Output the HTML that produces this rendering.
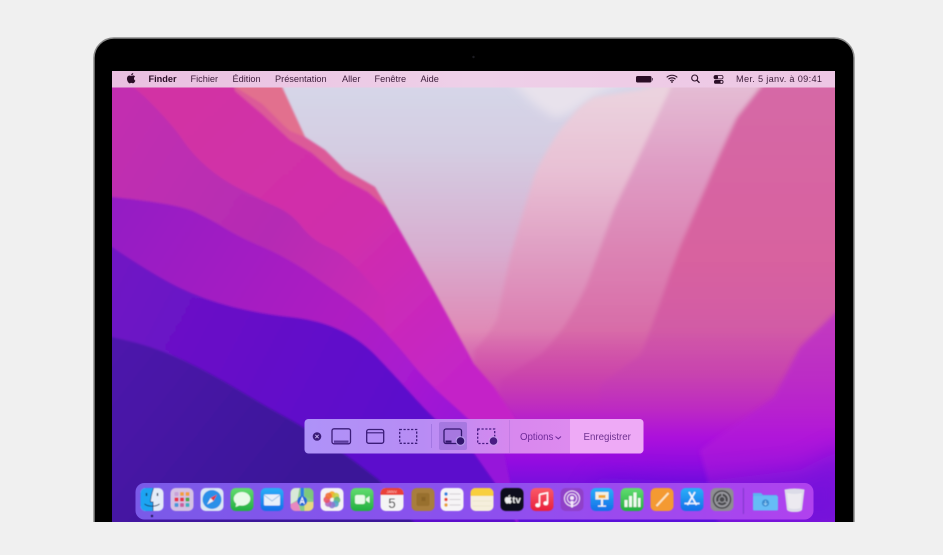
<!DOCTYPE html>
<html>
<head>
<meta charset="utf-8">
<title>macOS</title>
<style>
html,body{margin:0;padding:0;background:#f0f0f0;width:943px;height:555px;overflow:hidden}
svg{display:block}
text{font-family:"Liberation Sans",sans-serif}
</style>
</head>
<body>
<svg width="943" height="555" viewBox="0 0 943 555" xmlns="http://www.w3.org/2000/svg">
<defs>
<clipPath id="scr"><rect x="112" y="71" width="723" height="451"/></clipPath>
<filter id="b1" x="-5%" y="-5%" width="110%" height="110%"><feGaussianBlur stdDeviation="1"/></filter>
<filter id="b2" x="-5%" y="-5%" width="110%" height="110%"><feGaussianBlur stdDeviation="2"/></filter>
<filter id="b3" x="-10%" y="-10%" width="120%" height="120%"><feGaussianBlur stdDeviation="5"/></filter>
<filter id="b4" x="-20%" y="-20%" width="140%" height="140%"><feGaussianBlur stdDeviation="12"/></filter>
<filter id="s" x="-5%" y="-5%" width="110%" height="110%"><feGaussianBlur stdDeviation="0.35"/></filter>
<filter id="d" x="-5%" y="-5%" width="110%" height="110%"><feGaussianBlur stdDeviation="0.5"/></filter>
<linearGradient id="sky" gradientUnits="userSpaceOnUse" x1="0" y1="87" x2="0" y2="400"><stop offset="0" stop-color="#d6d6e8"/><stop offset=".2" stop-color="#d4cde2"/><stop offset=".52" stop-color="#d8aed0"/><stop offset=".78" stop-color="#e08ab6"/><stop offset="1" stop-color="#e07aac"/></linearGradient>
<linearGradient id="la" gradientUnits="userSpaceOnUse" x1="0" y1="95" x2="0" y2="400"><stop offset="0" stop-color="#ebd2de"/><stop offset=".25" stop-color="#e8c0d4"/><stop offset=".5" stop-color="#e0a0c4"/><stop offset=".78" stop-color="#dc7cb0"/><stop offset="1" stop-color="#e060a0"/></linearGradient>
<linearGradient id="lb" gradientUnits="userSpaceOnUse" x1="0" y1="87" x2="0" y2="400"><stop offset="0" stop-color="#e4bcd4"/><stop offset=".26" stop-color="#df9cc4"/><stop offset=".52" stop-color="#dc84b4"/><stop offset=".78" stop-color="#d86ca8"/><stop offset="1" stop-color="#d6509e"/></linearGradient>
<linearGradient id="lc" gradientUnits="userSpaceOnUse" x1="0" y1="87" x2="0" y2="400"><stop offset="0" stop-color="#d668a6"/><stop offset=".55" stop-color="#d8629f"/><stop offset=".85" stop-color="#d058a8"/><stop offset="1" stop-color="#c84cb0"/></linearGradient>
<linearGradient id="bot" gradientUnits="userSpaceOnUse" x1="0" y1="330" x2="0" y2="522"><stop offset="0" stop-color="#c83cb0" stop-opacity="0"/><stop offset=".22" stop-color="#c63cb0" stop-opacity=".65"/><stop offset=".42" stop-color="#bc28c4"/><stop offset=".56" stop-color="#ac10dc"/><stop offset=".7" stop-color="#900ce0"/><stop offset=".84" stop-color="#7010dc"/><stop offset="1" stop-color="#5a10d8"/></linearGradient>
<linearGradient id="m1" gradientUnits="userSpaceOnUse" x1="200" y1="87" x2="470" y2="370"><stop offset="0" stop-color="#d232a4"/><stop offset=".55" stop-color="#d02eac"/><stop offset="1" stop-color="#c424c8"/></linearGradient>
<linearGradient id="m2" gradientUnits="userSpaceOnUse" x1="112" y1="120" x2="390" y2="290"><stop offset="0" stop-color="#c22fb0"/><stop offset=".6" stop-color="#b52cb4"/><stop offset="1" stop-color="#ca2cb6"/></linearGradient>
<linearGradient id="m3" gradientUnits="userSpaceOnUse" x1="112" y1="200" x2="470" y2="430"><stop offset="0" stop-color="#941ac4"/><stop offset=".6" stop-color="#ae1ec2"/><stop offset=".8" stop-color="#a81ad0"/><stop offset="1" stop-color="#9612da"/></linearGradient>
<linearGradient id="m4" gradientUnits="userSpaceOnUse" x1="112" y1="250" x2="400" y2="400"><stop offset="0" stop-color="#7014c4"/><stop offset="1" stop-color="#5c0ccc"/></linearGradient>
<linearGradient id="m5" gradientUnits="userSpaceOnUse" x1="112" y1="340" x2="300" y2="490"><stop offset="0" stop-color="#4e12ac"/><stop offset="1" stop-color="#3a1298"/></linearGradient>
<linearGradient id="menu" x1="0" y1="0" x2="1" y2="0"><stop offset="0" stop-color="#e9bfe0"/><stop offset=".5" stop-color="#eed0e8"/><stop offset="1" stop-color="#edc6e4"/></linearGradient>
<linearGradient id="dock" x1="0" y1="0" x2="1" y2="0"><stop offset="0" stop-color="#7a5ae8"/><stop offset=".5" stop-color="#8c50ee"/><stop offset="1" stop-color="#b042ee"/></linearGradient>
<linearGradient id="tb" x1="0" y1="0" x2="1" y2="0"><stop offset="0" stop-color="#ae92f8"/><stop offset=".35" stop-color="#b88cf4"/><stop offset=".62" stop-color="#d888ee"/><stop offset="1" stop-color="#e48cf0"/></linearGradient>
<linearGradient id="gG" x1="0" y1="0" x2="0" y2="1"><stop offset="0" stop-color="#62dc70"/><stop offset="1" stop-color="#22b040"/></linearGradient>
<linearGradient id="gB" x1="0" y1="0" x2="0" y2="1"><stop offset="0" stop-color="#2ab0f8"/><stop offset="1" stop-color="#1470e8"/></linearGradient>
<linearGradient id="gR" x1="0" y1="0" x2="0" y2="1"><stop offset="0" stop-color="#fa5a68"/><stop offset="1" stop-color="#e8203c"/></linearGradient>
<path id="apl" d="M12.152 6.896c-.948 0-2.415-1.078-3.96-1.04-2.04.027-3.91 1.183-4.961 3.014-2.117 3.675-.546 9.103 1.519 12.09 1.013 1.454 2.208 3.09 3.792 3.039 1.52-.065 2.09-.987 3.935-.987 1.831 0 2.35.987 3.96.948 1.637-.026 2.676-1.48 3.676-2.948 1.156-1.688 1.636-3.325 1.662-3.415-.039-.013-3.182-1.221-3.22-4.857-.026-3.04 2.48-4.494 2.597-4.559-1.429-2.09-3.623-2.324-4.39-2.376-2-.156-3.675 1.09-4.61 1.09zM15.53 3.83c.843-1.012 1.4-2.427 1.245-3.83-1.207.052-2.662.805-3.532 1.818-.78.896-1.454 2.338-1.273 3.714 1.338.104 2.715-.688 3.559-1.701"/>
</defs>

<rect width="943" height="555" fill="#f0f0f0"/>
<path d="M94 522V58a20 20 0 0 1 20-20H834a20 20 0 0 1 20 20V522Z" fill="#000"/>
<path d="M94 522V58a20 20 0 0 1 20-20H834a20 20 0 0 1 20 20V522" fill="none" stroke="#8a8a8a" stroke-width="1.500"/>
<circle cx="473.500" cy="57" r="1.200" fill="#1c1c22"/>

<g clip-path="url(#scr)">
 <rect x="105" y="65" width="740" height="465" fill="#4c10c0"/>
 <g filter="url(#b1)">
  <rect x="270" y="80" width="420" height="330" fill="url(#sky)"/>
 </g>
 <path d="M505 75L535 105L555 118L572 112L600 92L640 75Z" fill="#e8e2ec" filter="url(#b3)"/>
 <g filter="url(#b2)">
  <path d="M676 80L640 90L594 97Q580 105 571 117Q559 130 551 144Q541 160 534 177Q522 215 511 254Q503 290 497 320Q487 338 474 350V530H850V80Z" fill="url(#la)"/>
  <path d="M674 80L654 124Q642 150 631 174Q622 192 614 210Q600 248 587 284Q576 308 565 325Q553 342 541 354L500 380V530H850V80Z" fill="url(#lb)"/>
  <path d="M766 80L737 117Q721 150 707 184Q694 214 681 244Q670 272 661 300Q651 328 641 354L600 385V530H850V80Z" fill="url(#lc)"/>
 </g>
 <rect x="440" y="320" width="410" height="210" fill="url(#bot)"/>
 <path d="M850 300L835 313L800 347L774 397L735 425L700 450L720 530H850Z" fill="#b41cd8" opacity=".55" filter="url(#b2)"/>
 <path d="M850 445L800 470L700 482L600 478L570 530H850Z" fill="#5a10dc" opacity=".5" filter="url(#b4)"/>

 <g filter="url(#b1)">
  <path d="M100 80H279L282 87L305 137L325 150L345 170L375 187L402 234L432 287L474 364L494 387L514 417L520 432L500 450L400 530H100Z" fill="url(#m1)"/>
  <path d="M232 80L235 87L262 104L282 124L305 137L325 150L345 170L375 187L388 209L368 192L340 177L312 153L290 140L262 114L235 91Z" fill="#dc5a98"/>
  <path d="M235 80H279L282 87L305 137L290 131L282 124L262 104L235 87Z" fill="#e2708e"/>
  <path d="M100 80H125L145 97Q172 124 182 139Q192 154 207 167Q222 180 242 190Q262 200 277 207Q292 214 302 227Q312 240 328 247Q345 254 365 277L385 300L385 340L100 300Z" fill="url(#m2)"/>
  <path d="M100 197L112 197Q179 204 195 212Q212 220 228 230Q245 240 265 248Q285 257 305 270Q325 284 348 300Q372 317 385 332Q399 347 415 367Q432 387 453 405L474 424L504 452L520 530H100Z" fill="url(#m3)"/>
  <path d="M100 240L112 247Q152 274 178 287Q205 300 233 307Q262 314 290 317Q319 320 340 330Q362 340 380 360Q399 380 415 398Q432 417 453 435L474 453L500 490L520 530H100Z" fill="url(#m4)"/>
  <path d="M100 334L112 337L137 343Q162 350 187 362Q212 374 237 389Q262 404 280 414Q299 424 322 439Q345 454 362 467L379 480L420 530H100Z" fill="url(#m5)"/>
 </g>

 <rect x="112" y="71" width="723" height="16.500" fill="url(#menu)"/>
</g>

<g filter="url(#s)">
 <use href="#apl" transform="translate(126,73) scale(.43)" fill="#2c1028"/>
 <g font-size="9.200" fill="#3d1d3a">
  <text x="148.500" y="82" font-weight="700" fill="#2c1028">Finder</text>
  <text x="190.500" y="82">Fichier</text>
  <text x="232.500" y="82">Édition</text>
  <text x="275" y="82">Présentation</text>
  <text x="342" y="82">Aller</text>
  <text x="374.500" y="82">Fenêtre</text>
  <text x="420.500" y="82">Aide</text>
  <text x="736" y="82" textLength="86" lengthAdjust="spacing">Mer. 5 janv. à 09:41</text>
 </g>
 <rect x="636" y="76" width="15.500" height="6.500" rx="1.600" fill="#2a1026"/>
 <rect x="652" y="78" width="1" height="2.500" fill="#6a4a66"/>
 <g fill="none" stroke="#2a1026" stroke-width="1.100">
  <path d="M666.700 77.400a7.600 7.600 0 0 1 10.600 0"/>
  <path d="M668.500 79.200a5 5 0 0 1 7 0"/>
  <path d="M670.200 80.900a2.600 2.600 0 0 1 3.600 0"/>
 </g>
 <circle cx="672" cy="82" r=".9" fill="#2a1026"/>
 <circle cx="694.700" cy="78" r="3" fill="none" stroke="#2a1026" stroke-width="1.100"/>
 <path d="M697 80.300L699.500 82.800" stroke="#2a1026" stroke-width="1.300"/>
 <rect x="714" y="75.500" width="9" height="3.400" rx="1.500" fill="none" stroke="#2a1026" stroke-width=".8"/>
 <rect x="714" y="75.300" width="4" height="3.800" rx="1.500" fill="#2a1026"/>
 <rect x="714" y="80" width="9.500" height="3.800" rx="1.700" fill="#2a1026"/>
 <circle cx="721.500" cy="81.900" r="1.100" fill="#e9c4e2"/>
</g>

<g>
 <rect x="304.500" y="419" width="339" height="34.500" rx="4" fill="url(#tb)"/>
 <path d="M570 419H639.500a4 4 0 0 1 4 4V449.500a4 4 0 0 1-4 4H570Z" fill="#eeaaf6"/>
 <rect x="439" y="422" width="28" height="28" rx="2" fill="#9a70d8" opacity=".7"/>
 <rect x="431" y="424" width=".8" height="24" fill="#8a60d0" opacity=".6"/>
 <rect x="509" y="420" width=".8" height="33" fill="#b070d8" opacity=".6"/>
 <g filter="url(#s)">
  <circle cx="317" cy="436.500" r="4.300" fill="#3a1a78"/>
  <path d="M315.300 434.800L318.700 438.200M318.700 434.800L315.300 438.200" stroke="#c8b4f0" stroke-width=".9"/>
  <rect x="332" y="428.800" width="18.500" height="15" rx="2" fill="none" stroke="#3a1a78" stroke-width="1.300"/>
  <rect x="334" y="440.500" width="14.500" height="2.300" fill="#5a3a9c"/>
  <rect x="366.700" y="429.500" width="17" height="13.800" rx="2" fill="none" stroke="#3a1a78" stroke-width="1.300"/>
  <path d="M367 432.800H383.500" stroke="#3a1a78" stroke-width="1.200"/>
  <rect x="399.700" y="429.500" width="17" height="13.800" fill="none" stroke="#3a1a78" stroke-width="1.300" stroke-dasharray="2.200 1.600"/>
  <rect x="444" y="429" width="17.500" height="14.500" rx="2" fill="none" stroke="#33146c" stroke-width="1.300"/>
  <rect x="445.500" y="440.500" width="6" height="2.200" fill="#33146c"/>
  <circle cx="460.500" cy="441" r="4.900" fill="#b49ae8"/>
  <circle cx="460.500" cy="441" r="3.800" fill="#33146c"/>
  <rect x="477.700" y="429" width="17" height="14.500" fill="none" stroke="#4a1a84" stroke-width="1.300" stroke-dasharray="2.200 1.600"/>
  <circle cx="493.500" cy="441" r="4.900" fill="#c89cec"/>
  <circle cx="493.500" cy="441" r="3.800" fill="#4a1a84"/>
  <text x="520" y="440" font-size="9.700" fill="#6e2a98">Options</text>
  <path d="M555.500 436.500L558.300 438.800L561 436.500" fill="none" stroke="#6e2a98" stroke-width="1"/>
  <text x="583.500" y="440" font-size="9.700" fill="#6e3090">Enregistrer</text>
 </g>
</g>

<rect x="135.500" y="483" width="678" height="36.500" rx="9" fill="url(#dock)"/>
<g filter="url(#d)">
<circle cx="152" cy="516" r="1.100" fill="#120a40"/>
<rect x="743" y="488" width=".8" height="26" fill="#6a30b8" opacity=".8"/>

<g transform="translate(140.500,488)">
 <rect width="23" height="23" rx="5" fill="#e4ecf8"/>
 <path d="M5 0H13C11 6 10 11 10 14H12.500V23H5A5 5 0 0 1 0 18V5A5 5 0 0 1 5 0Z" fill="#1ea4f2"/>
 <path d="M13 0C11 6 10 11 10 14H12.500V23" fill="none" stroke="#0e3a70" stroke-width=".8"/>
 <path d="M6 5V8M17 5V8" stroke="#0e2a50" stroke-width="1.300"/>
 <path d="M4 16C8 19 15 19 19 16" fill="none" stroke="#0e2a50" stroke-width=".8"/>
</g>
<g transform="translate(170.500,488)">
 <rect width="23" height="23" rx="5" fill="#d6c2e4"/>
 <rect x="4" y="4" width="4" height="4" rx="1" fill="#c8a0d8"/><rect x="9.500" y="4" width="4" height="4" rx="1" fill="#f0a040"/><rect x="15" y="4" width="4" height="4" rx="1" fill="#f0a040"/>
 <rect x="4" y="9.500" width="4" height="4" rx="1" fill="#e83048"/><rect x="9.500" y="9.500" width="4" height="4" rx="1" fill="#e83048"/><rect x="15" y="9.500" width="4" height="4" rx="1" fill="#50a848"/>
 <rect x="4" y="15" width="4" height="4" rx="1" fill="#4898d8"/><rect x="9.500" y="15" width="4" height="4" rx="1" fill="#c860a0"/><rect x="15" y="15" width="4" height="4" rx="1" fill="#40b0c0"/>
</g>
<g transform="translate(200.500,488)">
 <rect width="23" height="23" rx="5" fill="#dce8f4"/>
 <circle cx="11.500" cy="11.500" r="9.500" fill="#2c90e8"/>
 <path d="M16.500 6.500L10 10L13 13Z" fill="#e83838"/>
 <path d="M6.500 16.500L10 10L13 13Z" fill="#f2f2f2"/>
</g>
<g transform="translate(230.500,488)">
 <rect width="23" height="23" rx="5" fill="url(#gG)"/>
 <ellipse cx="11.500" cy="10.800" rx="8.300" ry="6.800" fill="#e8fae8"/>
 <path d="M6 15L5 19L10 17Z" fill="#e8fae8"/>
</g>
<g transform="translate(260.500,488)">
 <rect width="23" height="23" rx="5" fill="url(#gB)"/>
 <rect x="3.500" y="6.500" width="16" height="11" rx="1" fill="#e8f0fa"/>
 <path d="M3.500 7L11.500 13L19.500 7" fill="none" stroke="#9cc0e4" stroke-width=".9"/>
</g>
<g transform="translate(290.500,488)">
 <rect width="23" height="23" rx="5" fill="#88cc88"/>
 <path d="M0 5A5 5 0 0 1 5 0H9L7 12L0 16Z" fill="#d8e8d8"/>
 <path d="M15 0H18A5 5 0 0 1 23 5V12L14 8Z" fill="#7cc87c"/>
 <path d="M0 16L7 13L10 23H5A5 5 0 0 1 0 18Z" fill="#e888c0"/>
 <path d="M14 14L23 14V18A5 5 0 0 1 18 23H14Z" fill="#e8d880"/>
 <path d="M10 0H13.500V9H10Z" fill="#2a80e0"/>
 <circle cx="11.700" cy="13" r="5" fill="#2468d8"/>
 <path d="M9.500 16L11.700 9.800L13.900 16M10.300 14H13.100" fill="none" stroke="#fff" stroke-width=".9"/>
</g>
<g transform="translate(320.500,488)">
 <rect width="23" height="23" rx="5" fill="#f4f2f4"/>
 <circle cx="11.500" cy="6.500" r="3.400" fill="#f5b030"/>
 <circle cx="15.500" cy="8" r="3.400" fill="#c8d040" opacity=".9"/>
 <circle cx="16.500" cy="12" r="3.400" fill="#60b870" opacity=".9"/>
 <circle cx="15" cy="15.800" r="3.400" fill="#50a8c8" opacity=".9"/>
 <circle cx="11.500" cy="17" r="3.400" fill="#8878d0" opacity=".9"/>
 <circle cx="7.800" cy="15.500" r="3.400" fill="#b068c0" opacity=".9"/>
 <circle cx="6.300" cy="11.700" r="3.400" fill="#e85068" opacity=".9"/>
 <circle cx="8" cy="8" r="3.400" fill="#f07038" opacity=".9"/>
</g>
<g transform="translate(350.500,488)">
 <rect width="23" height="23" rx="5" fill="url(#gG)"/>
 <rect x="4.500" y="7" width="10" height="9" rx="2" fill="#e8fae8"/>
 <path d="M15.500 10.500L19 8V15L15.500 12.500Z" fill="#e8fae8"/>
</g>
<g transform="translate(380.500,488)">
 <rect width="23" height="23" rx="5" fill="#f4f4f4"/>
 <path d="M5 0H18A5 5 0 0 1 23 5V7H0V5A5 5 0 0 1 5 0Z" fill="#ea4038"/>
 <text x="11.500" y="5.200" font-size="4" fill="#fbd0c8" text-anchor="middle">JANV.</text>
 <text x="11.500" y="20" font-size="13.500" fill="#3a3a3a" text-anchor="middle">5</text>
</g>
<g transform="translate(411.500,488)">
 <rect width="23" height="23" rx="5" fill="#a87e3c"/>
 <rect x="5" y="5" width="13" height="13" rx="2" fill="#98702e"/>
 <rect x="10" y="9" width="4" height="4" fill="#8a6428"/>
</g>
<g transform="translate(440.500,488)">
 <rect width="23" height="23" rx="5" fill="#f6f4f6"/>
 <circle cx="5.500" cy="6" r="1.700" fill="#2a80e0"/><circle cx="5.500" cy="11.500" r="1.700" fill="#e84030"/><circle cx="5.500" cy="17" r="1.700" fill="#e8a030"/>
 <path d="M9 6H20M9 11.500H20M9 17H20" stroke="#c8c4c8" stroke-width=".8"/>
</g>
<g transform="translate(470.500,488)">
 <rect width="23" height="23" rx="5" fill="#f5efdc"/>
 <path d="M5 0H18A5 5 0 0 1 23 5V8H0V5A5 5 0 0 1 5 0Z" fill="#f8cf3c"/>
 <path d="M2 13H21M2 18H21" stroke="#e6dec4" stroke-width=".6"/>
</g>
<g transform="translate(500.500,488)">
 <rect width="23" height="23" rx="5" fill="#10101a"/>
 <use href="#apl" transform="translate(3.500,7) scale(.36)" fill="#f0f0f0"/>
 <text x="11.800" y="15.200" font-size="9.500" font-weight="700" fill="#f0f0f0">tv</text>
</g>
<g transform="translate(530.500,488)">
 <rect width="23" height="23" rx="5" fill="url(#gR)"/>
 <path d="M9 6.500L17 4.800V15" fill="none" stroke="#fff" stroke-width="1.500"/>
 <path d="M9 6.500V17" stroke="#fff" stroke-width="1.500"/>
 <ellipse cx="7.300" cy="17.200" rx="2.400" ry="2" fill="#fff"/>
 <ellipse cx="15.300" cy="15.300" rx="2.400" ry="2" fill="#fff"/>
</g>
<g transform="translate(560.500,488)">
 <rect width="23" height="23" rx="5" fill="#9040c8"/>
 <g fill="none" stroke="#f0dcf8" stroke-width="1.100">
  <circle cx="11.500" cy="10.500" r="7.500"/>
  <circle cx="11.500" cy="10.500" r="4.700"/>
 </g>
 <circle cx="11.500" cy="10" r="2" fill="#f4e8fa"/>
 <path d="M10 13H13L12.400 19.500H10.600Z" fill="#f4e8fa"/>
</g>
<g transform="translate(590.500,488)">
 <rect width="23" height="23" rx="5" fill="url(#gB)"/>
 <rect x="5" y="4" width="13" height="7.500" fill="#f4f0e0"/>
 <rect x="8" y="7" width="7" height="3" fill="#f0a830"/>
 <path d="M10.500 11.500H12.500V17.500H10.500Z" fill="#f4f4f4"/>
 <rect x="7.500" y="17.500" width="8" height="1.200" fill="#f4f4f4"/>
</g>
<g transform="translate(620.500,488)">
 <rect width="23" height="23" rx="5" fill="url(#gG)"/>
 <rect x="4" y="12" width="3" height="7" fill="#f0faf0"/>
 <rect x="8.500" y="8" width="3" height="11" fill="#f0faf0"/>
 <rect x="13" y="4.500" width="3" height="14.500" fill="#f0faf0"/>
 <rect x="17.500" y="10" width="2.500" height="9" fill="#f0faf0"/>
</g>
<g transform="translate(650.500,488)">
 <rect width="23" height="23" rx="5" fill="#f49a30"/>
 <path d="M6 18L18 5" stroke="#fbe8c8" stroke-width="2"/>
</g>
<g transform="translate(680.500,488)">
 <rect width="23" height="23" rx="5" fill="url(#gB)"/>
 <path d="M14.500 4L7 17M8.500 4L16 17M4 15.500H19" fill="none" stroke="#f4f8ff" stroke-width="1.600"/>
</g>
<g transform="translate(710.500,488)">
 <rect width="23" height="23" rx="5" fill="#8e8e92"/>
 <circle cx="11.500" cy="11.500" r="9.300" fill="#4a4a4e"/>
 <circle cx="11.500" cy="11.500" r="6.800" fill="none" stroke="#9a9aa0" stroke-width="1.800"/>
 <circle cx="11.500" cy="11.500" r="3" fill="none" stroke="#9a9aa0" stroke-width="1.100"/>
 <path d="M11.500 5V8.500M5.800 15L8.800 13.200M17.200 15L14.200 13.200" stroke="#9a9aa0" stroke-width="1.100"/>
</g>
<g transform="translate(752,490)">
 <path d="M1 3H9L11 5H25V20H1Z" fill="#5cb4f0"/>
 <rect x="1" y="6" width="25" height="14.500" rx="1" fill="#66bcf6"/>
 <circle cx="13.500" cy="13" r="3.600" fill="#3a8cd0"/>
 <path d="M13.500 10.800V14.800M11.800 13.300L13.500 15L15.200 13.300" fill="none" stroke="#9cd4f8" stroke-width=".8"/>
</g>
<g transform="translate(784,488)">
 <path d="M0.500 1.500Q10.500 -.5 20.500 1.500L18.200 21Q18 24 10.500 24Q3 24 2.800 21Z" fill="#dcdce8"/>
 <path d="M3 5Q10.500 7 18 5L16.500 20Q10.500 22 4.500 20Z" fill="#eceaf0"/>
</g>
</g>
</svg>
</body>
</html>
